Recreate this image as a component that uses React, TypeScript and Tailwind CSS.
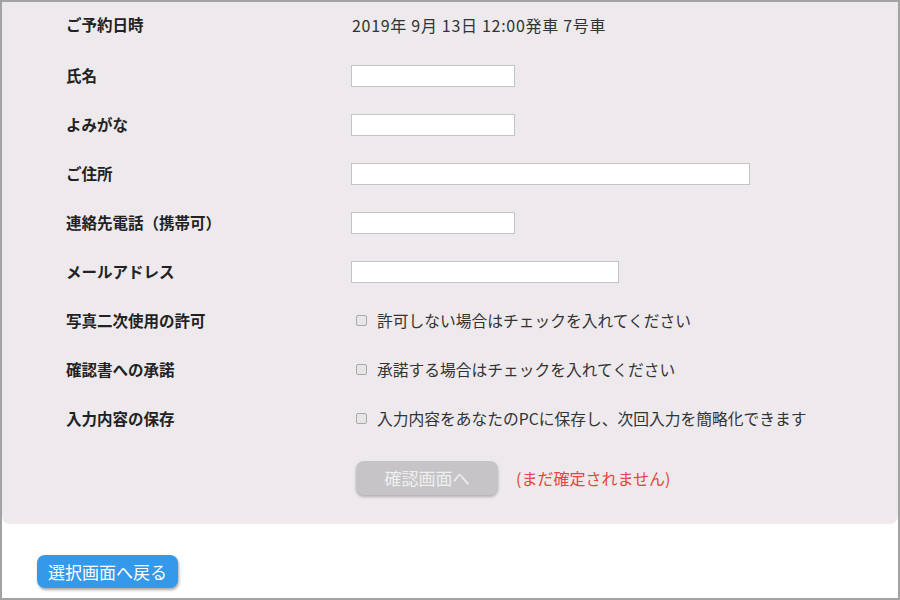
import React from 'react'

const font = { fontFamily: '"Noto Sans CJK JP", "Noto Sans", sans-serif' }

function Row({ label, children, first }: { label: string; children?: React.ReactNode; first?: boolean }) {
  return (
    <div className={`flex items-center h-[49px] ${first ? 'pb-[4px]' : ''}`}>
      <div className="w-[349px] shrink-0 pl-[64px] text-[15.5px] font-bold text-[#222]">{label}</div>
      <div className="flex items-center">{children}</div>
    </div>
  )
}

function TextBox({ w }: { w: string }) {
  return <input type="text" className={`${w} h-[22px] bg-white border border-[#c4c4c4] outline-none`} />
}

function Check({ text }: { text: string }) {
  return (
    <label className="flex items-center text-[15.75px] text-[#333]">
      <span className="w-[11px] h-[11px] ml-[5px] mr-[10px] rounded-[2px] border border-[#a9a9a9] bg-[#e6e6e6]" />
      {text}
    </label>
  )
}

export default function App() {
  return (
    <div className="w-[900px] h-[600px] border-2 border-[#a3a3a3] bg-white overflow-hidden" style={font}>
      <div className="bg-[#ede9ec] rounded-b-lg pb-[29px]">
        <Row label="ご予約日時" first>
          <span className="pl-px text-[16px] text-[#333] tracking-[0.7px]">2019年 9月 13日 12:00発車 7号車</span>
        </Row>
        <Row label="氏名">
          <TextBox w="w-[164px]" />
        </Row>
        <Row label="よみがな">
          <TextBox w="w-[164px]" />
        </Row>
        <Row label="ご住所">
          <TextBox w="w-[399px]" />
        </Row>
        <Row label="連絡先電話（携帯可）">
          <TextBox w="w-[164px]" />
        </Row>
        <Row label="メールアドレス">
          <TextBox w="w-[268px]" />
        </Row>
        <Row label="写真二次使用の許可">
          <Check text="許可しない場合はチェックを入れてください" />
        </Row>
        <Row label="確認書への承諾">
          <Check text="承諾する場合はチェックを入れてください" />
        </Row>
        <Row label="入力内容の保存">
          <Check text="入力内容をあなたのPCに保存し、次回入力を簡略化できます" />
        </Row>
        <div className="flex items-center mt-[18px] pl-[354px]">
          <button
            disabled
            className="w-[142px] h-[34px] rounded-lg bg-[#c6c4c6] text-[#efefef] text-[17px] shadow-[0_2px_3px_rgba(0,0,0,0.25)]"
          >
            確認画面へ
          </button>
          <span className="ml-[18px] text-[16px] text-[#e8453c]">(まだ確定されません)</span>
        </div>
      </div>
      <button className="mt-[31px] ml-[35px] w-[141px] h-[33px] rounded-lg bg-[#3399e8] text-white text-[17px] shadow-[1px_2px_3px_rgba(0,0,0,0.35)]">
        選択画面へ戻る
      </button>
    </div>
  )
}
